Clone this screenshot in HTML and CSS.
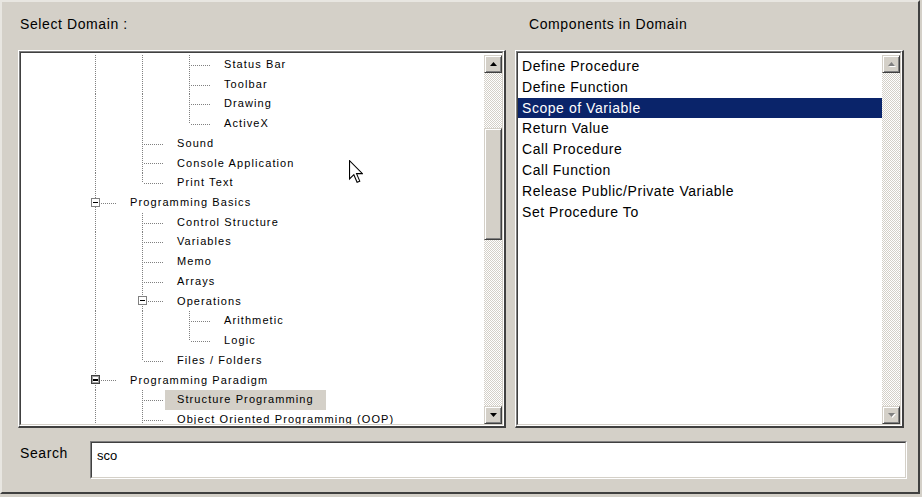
FILE: index.html
```html
<!DOCTYPE html>
<html>
<head>
<meta charset="utf-8">
<link rel="stylesheet" href="styles.css">
</head>
<body>
<div class="window">
  <div class="panes">
    <div class="pane pane-left">
      <div class="title">Select Domain :</div>
      <div class="frame"><div class="well"><div class="inner">
        <div class="tree">
          <div class="row"><span class="g"></span><span class="g"></span><span class="k tee"></span><span class="lbl">Status Bar</span></div>
          <div class="row"><span class="g"></span><span class="g"></span><span class="k tee"></span><span class="lbl">Toolbar</span></div>
          <div class="row"><span class="g"></span><span class="g"></span><span class="k tee"></span><span class="lbl">Drawing</span></div>
          <div class="row"><span class="g"></span><span class="g"></span><span class="k elbow"></span><span class="lbl">ActiveX</span></div>
          <div class="row"><span class="g"></span><span class="k tee"></span><span class="lbl">Sound</span></div>
          <div class="row"><span class="g"></span><span class="k tee"></span><span class="lbl">Console Application</span></div>
          <div class="row"><span class="g"></span><span class="k elbow"></span><span class="lbl">Print Text</span></div>
          <div class="row"><span class="k tee"><i class="box"></i></span><span class="lbl">Programming Basics</span></div>
          <div class="row"><span class="g"></span><span class="k tee"></span><span class="lbl">Control Structure</span></div>
          <div class="row"><span class="g"></span><span class="k tee"></span><span class="lbl">Variables</span></div>
          <div class="row"><span class="g"></span><span class="k tee"></span><span class="lbl">Memo</span></div>
          <div class="row"><span class="g"></span><span class="k tee"></span><span class="lbl">Arrays</span></div>
          <div class="row"><span class="g"></span><span class="k tee"><i class="box"></i></span><span class="lbl">Operations</span></div>
          <div class="row"><span class="g"></span><span class="g"></span><span class="k tee"></span><span class="lbl">Arithmetic</span></div>
          <div class="row"><span class="g"></span><span class="g"></span><span class="k elbow"></span><span class="lbl">Logic</span></div>
          <div class="row"><span class="g"></span><span class="k elbow"></span><span class="lbl">Files / Folders</span></div>
          <div class="row"><span class="k tee"><i class="box box-focus"></i></span><span class="lbl">Programming Paradigm</span></div>
          <div class="row"><span class="g"></span><span class="k tee"></span><span class="lbl lbl-sel">Structure Programming</span></div>
          <div class="row"><span class="g"></span><span class="k tee"></span><span class="lbl">Object Oriented Programming (OOP)</span></div>
        </div>
        <div class="vscroll">
          <div class="sbtn"><svg width="7" height="4" viewBox="0 0 7 4"><polygon points="3.5,0 7,4 0,4" fill="#000"/></svg></div>
          <div class="thumb"></div>
          <div class="sfill"></div>
          <div class="sbtn"><svg width="7" height="4" viewBox="0 0 7 4"><polygon points="0,0 7,0 3.5,4" fill="#000"/></svg></div>
        </div>
      </div></div></div>
    </div>
    <div class="pane pane-right">
      <div class="title">Components in Domain</div>
      <div class="frame"><div class="well"><div class="inner">
        <div class="list">
          <div class="item">Define Procedure</div>
          <div class="item">Define Function</div>
          <div class="item item-sel">Scope of Variable</div>
          <div class="item">Return Value</div>
          <div class="item">Call Procedure</div>
          <div class="item">Call Function</div>
          <div class="item">Release Public/Private Variable</div>
          <div class="item">Set Procedure To</div>
        </div>
        <div class="vscroll">
          <div class="sbtn"><svg class="dis" width="7" height="4" viewBox="0 0 7 4"><polygon points="3.5,0 7,4 0,4" fill="#808080"/></svg></div>
          <div class="sfill"></div>
          <div class="sbtn"><svg class="dis" width="7" height="4" viewBox="0 0 7 4"><polygon points="0,0 7,0 3.5,4" fill="#808080"/></svg></div>
        </div>
      </div></div></div>
    </div>
  </div>
  <div class="search">
    <div class="search-label">Search</div>
    <div class="search-box"><div class="search-inner">sco</div></div>
  </div>
  <svg class="cursor" width="14" height="24" viewBox="0 0 13 22"><path d="M0.5 0.5V17.5L4.5 13.5L7.5 20.5L10 19.5L7 12.5H12.5Z" fill="#fff" stroke="#000" stroke-width="1"/></svg>
</div>
</body>
</html>
```
FILE: styles.css
```css
* { box-sizing: border-box; }
body {
  margin: 0;
  background: #d4d0c8;
  font-family: "Liberation Sans", Arial, sans-serif;
  color: #000;
}
.window {
  position: relative;
  width: 920px;
  height: 494px;
  background: #d4d0c8;
  border-top: 2px solid #e8e6e1;
  border-left: 2px solid #e8e6e1;
  border-right: 2px solid #404040;
  border-bottom: 2px solid #404040;
  display: flex;
  flex-direction: column;
}
.panes {
  display: grid;
  grid-template-columns: 488px 389px;
  column-gap: 9px;
  margin-left: 16px;
}
.pane { display: flex; flex-direction: column; }
.title {
  height: 48px;
  line-height: 44px;
  font-size: 14px;
  letter-spacing: 0.6px;
  white-space: nowrap;
}
.pane-left .title { padding-left: 2px; }
.pane-right .title { padding-left: 14px; }
.frame {
  height: 378px;
  border-style: solid;
  border-width: 1px 2px 2px 1px;
  border-color: #fff #404040 #404040 #fff;
}
.well {
  height: 100%;
  border: 1px solid;
  border-color: #808080 #fff #fff #808080;
}
.inner {
  height: 100%;
  border: 1px solid;
  border-color: #404040 #d4d0c8 #d4d0c8 #404040;
  background: #fff;
  display: flex;
}

/* tree */
.tree {
  flex: 1;
  overflow: hidden;
  padding-top: 2px;
  font-size: 11px;
  letter-spacing: 1.1px;
}
.row {
  display: flex;
  height: 19.72px;
  padding-left: 74px;
  white-space: nowrap;
}
.g {
  flex: none;
  width: 47px;
  background: linear-gradient(#808080 50%, transparent 50%) 0 0 / 1px 2px repeat-y;
}
.k {
  flex: none;
  width: 23px;
  position: relative;
}
.k::before {
  content: "";
  position: absolute;
  left: 0;
  top: 0;
  width: 1px;
  height: 100%;
  background: linear-gradient(#808080 50%, transparent 50%) 0 0 / 1px 2px repeat-y;
}
.k.elbow::before { height: 50%; }
.k::after {
  content: "";
  position: absolute;
  left: 1px;
  top: 50%;
  width: 21px;
  height: 1px;
  background: linear-gradient(to right, transparent 50%, #808080 50%) 0 0 / 2px 1px repeat-x;
}
.box {
  position: absolute;
  left: -4px;
  top: 50%;
  margin-top: -5px;
  width: 9px;
  height: 9px;
  background: #fff;
  border: 1px solid #808080;
  z-index: 1;
}
.box::before {
  content: "";
  position: absolute;
  left: 1px;
  top: 3px;
  width: 5px;
  height: 1px;
  background: #000;
}
.box-focus { border-color: #404040; box-shadow: inset 0 0 0 1px #a0a0a0; }
.box-focus::before { top: 3px; height: 2px; }
.lbl {
  padding: 0 12px;
  line-height: 19.72px;
}
.lbl-sel { background: #d4d0c8; }

/* list */
.list {
  flex: 1;
  padding-top: 3px;
  font-size: 14px;
  letter-spacing: 0.55px;
}
.item {
  height: 20.8px;
  line-height: 20.8px;
  padding-left: 4px;
  white-space: nowrap;
}
.item-sel { background: #0a246a; color: #fff; }

/* scrollbars */
.vscroll {
  flex: none;
  width: 18px;
  margin-top: 2px;
  display: flex;
  flex-direction: column;
  background: repeating-conic-gradient(#d4d0c8 0 25%, #fff 0 50%) 0 0 / 2px 2px;
}
.sbtn, .thumb {
  background: #d4d0c8;
  border: 1px solid;
  border-color: #d4d0c8 #404040 #404040 #d4d0c8;
  box-shadow: inset 1px 1px #fff, inset -1px -1px #808080;
}
.sbtn {
  flex: none;
  height: 18px;
  display: flex;
  align-items: center;
  justify-content: center;
}
.sbtn svg { display: block; }
.dis { filter: drop-shadow(1px 1px 0 #fff); }
.thumb {
  flex: none;
  margin-top: 55px;
  height: 112px;
}
.sfill { flex: 1; }

/* search */
.search {
  display: flex;
  margin-top: 13px;
  padding-left: 18px;
}
.search-label {
  width: 70px;
  padding-top: 4px;
  line-height: 16px;
  font-size: 14px;
  letter-spacing: 0.6px;
}
.search-box {
  width: 817px;
  height: 38px;
  border: 1px solid;
  border-color: #808080 #fff #fff #808080;
}
.search-inner {
  height: 100%;
  border: 1px solid;
  border-color: #404040 #d4d0c8 #d4d0c8 #404040;
  background: #fff;
  padding: 5px 0 0 5px;
  font-size: 13px;
  line-height: 16px;
}
.cursor {
  position: absolute;
  left: 347px;
  top: 158px;
}
```
